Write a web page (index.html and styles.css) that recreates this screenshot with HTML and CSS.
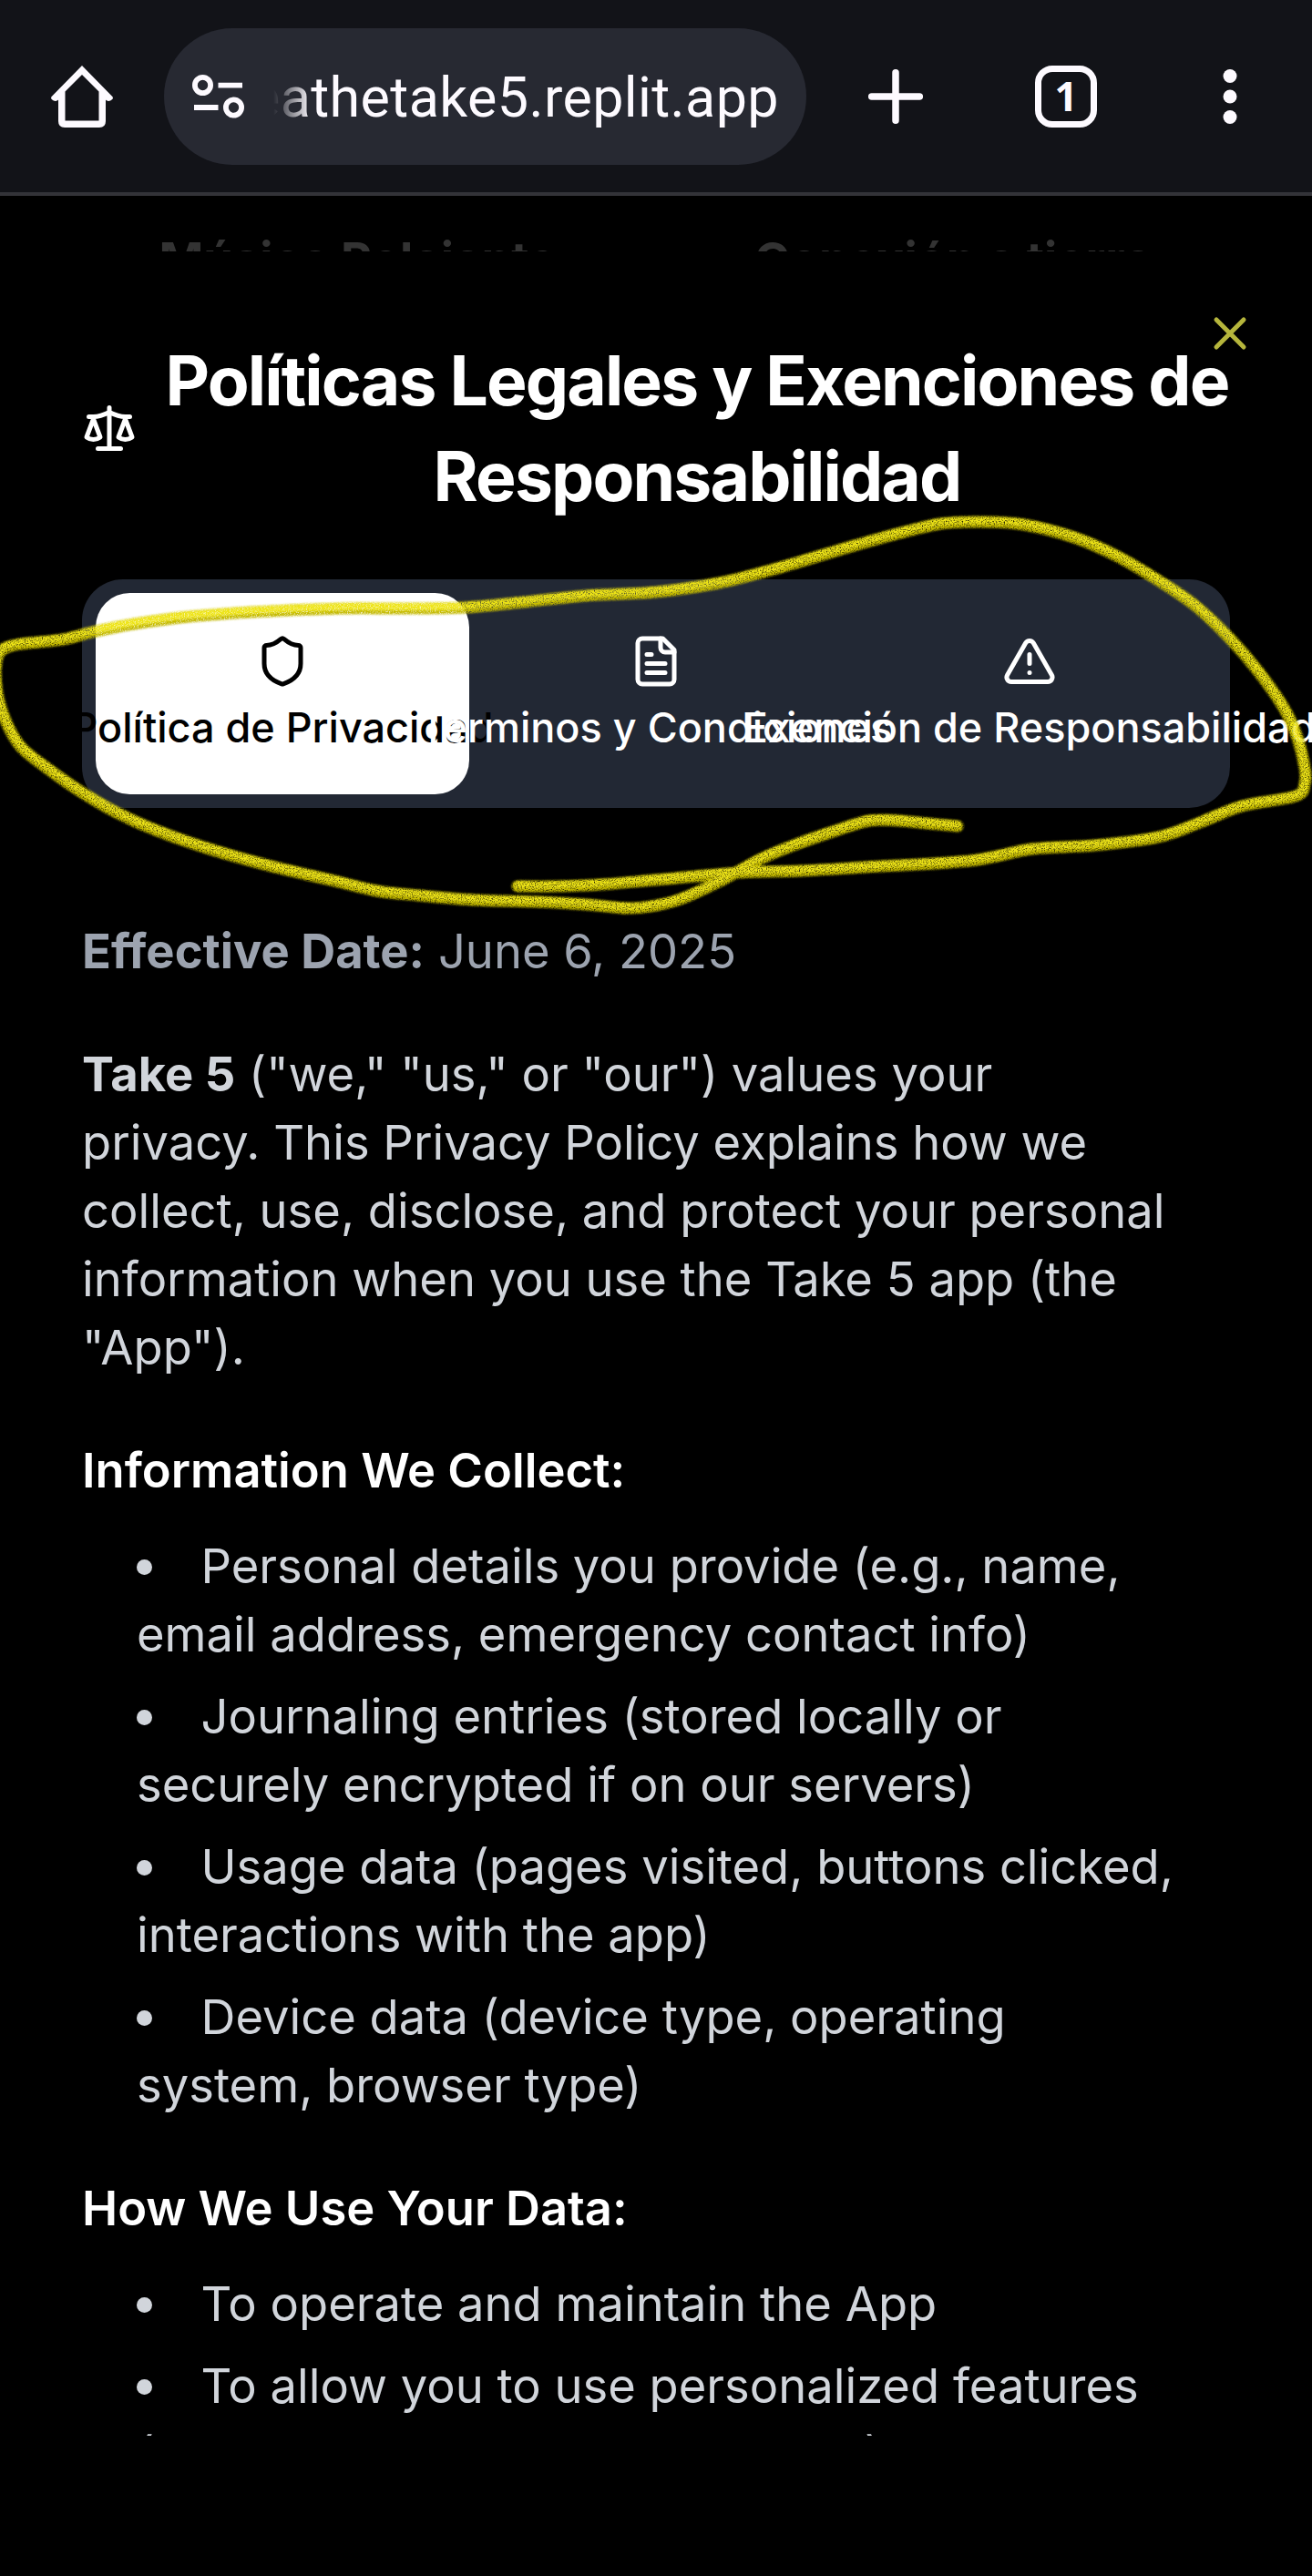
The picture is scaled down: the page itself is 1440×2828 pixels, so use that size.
FILE: index.html
```html
<!DOCTYPE html>
<html lang="es">
<head>
<meta charset="utf-8">
<title>Take 5</title>
<link rel="stylesheet" href="styles.css">
</head>
<body>
<header class="toolbar">
  <svg class="tool-icon home" viewBox="0 0 90 90"><path d="M11.200 45.500 45 11 78.800 45.500V47.500Q75.500 51.500 71.500 49L71 48.600V72Q71 79 64 79H26Q19 79 19 72V48.600L18.500 49Q14.500 51.500 11.200 47.500ZM45 21 26.500 39.500V71.500H63.500V39.500Z" fill="currentColor" fill-rule="evenodd"/></svg>
  <div class="address">
    <svg class="site-info" viewBox="0 0 58 50"><g fill="none" stroke="currentColor" stroke-width="5.8"><circle cx="11.5" cy="12.5" r="8.6"/><circle cx="45.5" cy="37" r="8.6"/><path d="M28.5 12.7H55M2 37H28.5"/></g></svg>
    <div class="url"><span>breathetake5.replit.app</span></div>
  </div>
  <svg class="tool-icon plus" viewBox="0 0 90 90"><path d="M45 18.7V71.3M18.7 45H71.3" stroke="currentColor" stroke-width="7.5" stroke-linecap="round"/></svg>
  <div class="tab-count">1</div>
  <svg class="tool-icon more" viewBox="0 0 90 90"><g fill="currentColor"><circle cx="45" cy="22.5" r="7.5"/><circle cx="45" cy="45" r="7.5"/><circle cx="45" cy="67.5" r="7.5"/></g></svg>
</header>

<div class="behind">
  <span>Música Relajante</span>
  <span>Conexión a tierra</span>
</div>

<main class="dialog">
  <svg class="close icon" viewBox="0 0 24 24"><path d="M18 6 6 18M6 6l12 12"/></svg>
  <div class="title">
    <svg class="icon" viewBox="0 0 24 24"><path d="m16 16 3-8 3 8c-.87.65-1.92 1-3 1s-2.13-.35-3-1Z"/><path d="m2 16 3-8 3 8c-.87.65-1.92 1-3 1s-2.13-.35-3-1Z"/><path d="M7 21h10M12 3v18M3 7h2c2 0 5-1 7-2 2 1 5 2 7 2h2"/></svg>
    <h1>Políticas Legales y Exenciones de Responsabilidad</h1>
  </div>

  <div class="tabs">
    <div class="tab active">
      <svg class="icon" viewBox="0 0 24 24"><path d="M20 13c0 5-3.5 7.5-7.66 8.95a1 1 0 0 1-.67-.01C7.5 20.5 4 18 4 13V6a1 1 0 0 1 1-1c2 0 4.500-1.200 6.240-2.720a1.170 1.170 0 0 1 1.520 0C14.510 3.810 17 5 19 5a1 1 0 0 1 1 1z"/></svg>
      <span>Política de Privacidad</span>
    </div>
    <div class="tab">
      <svg class="icon" viewBox="0 0 24 24"><path d="M15 2H6a2 2 0 0 0-2 2v16a2 2 0 0 0 2 2h12a2 2 0 0 0 2-2V7Z"/><path d="M14 2v4a2 2 0 0 0 2 2h4M10 9H8M16 13H8M16 17H8"/></svg>
      <span>Términos y Condiciones</span>
    </div>
    <div class="tab">
      <svg class="icon" viewBox="0 0 24 24"><path d="m21.730 18-8-14a2 2 0 0 0-3.480 0l-8 14A2 2 0 0 0 4 21h16a2 2 0 0 0 1.730-3M12 9v4M12 17h.01"/></svg>
      <span>Exención de Responsabilidad</span>
    </div>
  </div>

  <article class="policy">
    <p class="date"><strong>Effective Date:</strong> June 6, 2025</p>
    <p><strong>Take 5</strong> ("we," "us," or "our") values your privacy. This Privacy Policy explains how we collect, use, disclose, and protect your personal information when you use the Take 5 app (the "App").</p>
    <section>
      <h2>Information We Collect:</h2>
      <ul>
        <li>Personal details you provide (e.g., name, email address, emergency contact info)</li>
        <li>Journaling entries (stored locally or securely encrypted if on our servers)</li>
        <li>Usage data (pages visited, buttons clicked, interactions with the app)</li>
        <li>Device data (device type, operating system, browser type)</li>
      </ul>
    </section>
    <section>
      <h2>How We Use Your Data:</h2>
      <ul>
        <li>To operate and maintain the App</li>
        <li>To allow you to use personalized features (such as the emergency contact)</li>
      </ul>
    </section>
  </article>
</main>

<svg class="marker" viewBox="0 0 1440 2828">
  <defs>
    <filter id="grain" filterUnits="userSpaceOnUse" x="-20" y="540" width="1480" height="480">
      <feTurbulence type="fractalNoise" baseFrequency="0.8" numOctaves="2" seed="4" result="noise"/>
      <feColorMatrix in="noise" type="matrix" values="0 0 0 0 0  0 0 0 0 0  0 0 0 0 0  2 0 0 0 -0.1" result="mask"/>
      <feGaussianBlur in="SourceGraphic" stdDeviation="0.9" result="soft"/>
      <feComposite in="soft" in2="mask" operator="in"/>
    </filter>
  </defs>
  <g filter="url(#grain)"><path class="halo" id="stroke-wide"/><path class="core" id="stroke-core"/></g>
</svg>
<script src="marker.js"></script>
</body>
</html>
```
FILE: styles.css
```css
* { box-sizing: border-box; }
body {
  margin: 0;
  width: 1440px;
  height: 2828px;
  position: relative;
  overflow: hidden;
  background: #000;
  color: #fff;
  font-family: Inter, "Liberation Sans", sans-serif;
}
h1, h2, p, ul { margin: 0; padding: 0; }
svg { display: block; flex: none; }

.toolbar {
  display: flex;
  align-items: center;
  height: 215px;
  padding-left: 45px;
  background: #121318;
  border-bottom: 4px solid #333338;
  color: #fdfaff;
}
.tool-icon { width: 90px; height: 90px; }
.address {
  display: flex;
  align-items: center;
  width: 705px;
  height: 150px;
  margin-left: 45px;
  padding: 0 30px 0 31px;
  border-radius: 75px;
  background: #272932;
}
.site-info { width: 58px; height: 50px; }
.url {
  display: flex;
  justify-content: flex-end;
  flex: 1;
  margin-left: 31px;
  padding-top: 3px;
  overflow: hidden;
  white-space: nowrap;
  font: 400 61px/80px Roboto, sans-serif;
  letter-spacing: 0.4px;
  -webkit-mask-image: linear-gradient(90deg, transparent 0, #000 42px);
  mask-image: linear-gradient(90deg, transparent 0, #000 42px);
}
.plus { margin-left: 53px; }
.tab-count {
  width: 68px;
  height: 68px;
  margin-left: 108px;
  border: 7.5px solid currentColor;
  border-radius: 19px;
  font: 700 44px/53px "Open Sans", sans-serif;
  text-align: center;
}
.more { margin-left: 101px; }

.behind {
  display: grid;
  grid-template-columns: 1fr 1fr;
  height: 61px;
  padding: 33px 67px 0 66px;
  overflow: hidden;
  color: #333;
  font-size: 52.5px;
  line-height: 75px;
  font-weight: 700;
  text-align: center;
}

.dialog {
  position: relative;
  height: 2398px;
  padding: 89px 90px 0;
  overflow: hidden;
  background: #000;
}
.icon {
  width: 60px;
  height: 60px;
  fill: none;
  stroke: currentColor;
  stroke-width: 2;
  stroke-linecap: round;
  stroke-linejoin: round;
}
.close { position: absolute; top: 60px; right: 60px; color: #b5b53c; }
.title { display: flex; align-items: center; gap: 30px; }
.title h1 {
  flex: 1;
  font-size: 75px;
  line-height: 105px;
  font-weight: 700;
  letter-spacing: -0.025em;
  text-align: center;
}
.tabs {
  display: grid;
  grid-template-columns: repeat(3, minmax(0, 1fr));
  height: 251px;
  margin-top: 61px;
  padding: 15px;
  border-radius: 45px;
  background: #222834;
}
.tab {
  display: flex;
  flex-direction: column;
  align-items: center;
  justify-content: center;
  gap: 13px;
  padding-top: 1px;
  border-radius: 37.5px;
  font-size: 45px;
  line-height: 60px;
  font-weight: 500;
  white-space: nowrap;
}
.tab.active { background: #fff; color: #000; }

.policy {
  display: flex;
  flex-direction: column;
  gap: 60px;
  height: 1667px;
  margin-top: 120px;
  padding-right: 60px;
  overflow: hidden;
  color: #d1d5db;
  font-size: 52.5px;
  line-height: 75px;
}
.policy .date { color: #9ca3af; }
.policy strong { font-weight: 700; }
.policy h2 {
  margin-bottom: 30px;
  color: #fff;
  font-size: 52.5px;
  line-height: 75px;
  font-weight: 600;
}
.policy ul {
  display: flex;
  flex-direction: column;
  gap: 15px;
  margin-left: 60px;
  list-style: disc inside;
}

.marker {
  position: absolute;
  inset: 0;
  width: 1440px;
  height: 2828px;
  pointer-events: none;
}
.marker path { fill: none; stroke-linecap: round; stroke-linejoin: round; }
.marker .halo { stroke: #c2b806; stroke-width: 13px; }
.marker .core { stroke: #eee414; stroke-width: 8px; }
```
FILE: marker.js
```js
// Pen positions of the hand-drawn loop, joined with a Catmull-Rom curve.
const points = [
  [568,973],[610,973],[660,971],[720,966],[812,958],[880,956],[950,952],[1064,945],[1133,932],[1202,928],
  [1271,919],[1317,903],[1363,885],[1422,874],[1432,860],[1432,843],[1423,807],[1409,777],
  [1381,737],[1349,700],[1312,665],[1271,637],[1225,610],[1179,590],[1124,576],[1078,573],
  [1032,575],[977,588],[917,605],[849,625],[789,640],[720,650],[643,654],[574,661],[510,667],
  [436,668],[376,668],[275,672],[207,677],[147,685],[101,694],[69,702],[23,707],[3,713],
  [-4,728],[-3,760],[7,793],[23,820],[50,842],[87,868],[128,892],[170,911],[230,932],
  [298,951],[367,967],[413,978],[459,983],[519,988],[588,990],[643,993],[689,997],[720,994],
  [747,987],[789,968],[835,943],[871,928],[917,912],[954,901],[986,901],[1018,904],[1051,907]
];
let d = `M${points[0]}`;
for (let i = 0; i < points.length - 1; i++) {
  const a = points[Math.max(i - 1, 0)], b = points[i], c = points[i + 1];
  const e = points[Math.min(i + 2, points.length - 1)];
  d += `C${b[0] + (c[0] - a[0]) / 6} ${b[1] + (c[1] - a[1]) / 6} ${c[0] - (e[0] - b[0]) / 6} ${c[1] - (e[1] - b[1]) / 6} ${c}`;
}
document.getElementById("stroke-wide").setAttribute("d", d);
document.getElementById("stroke-core").setAttribute("d", d);
document.getElementById("stroke-core").setAttribute("transform", "translate(0 -2)");
```
